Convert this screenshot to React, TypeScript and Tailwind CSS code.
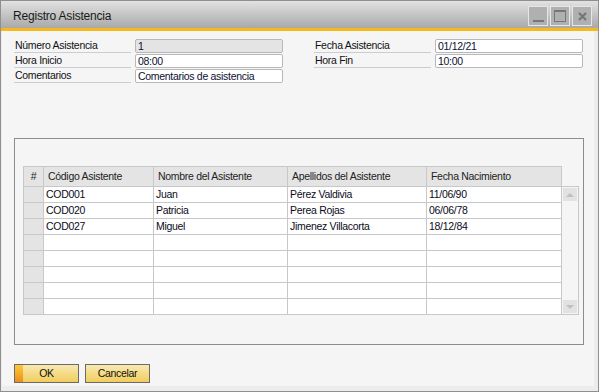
import React from "react";

const font = { fontFamily: '"Liberation Sans", Arial, sans-serif' };

const rows = [
  ["COD001", "Juan", "Pérez Valdivia", "11/06/90"],
  ["COD020", "Patricia", "Perea Rojas", "06/06/78"],
  ["COD027", "Miguel", "Jimenez Villacorta", "18/12/84"],
  ["", "", "", ""],
  ["", "", "", ""],
  ["", "", "", ""],
  ["", "", "", ""],
  ["", "", "", ""],
];

const cols = ["w-[110px]", "w-[134px]", "w-[139px]", "w-[135px]"];
const heads = ["Código Asistente", "Nombre del Asistente", "Apellidos del Asistente", "Fecha Nacimiento"];

const txt = "text-[10.5px] tracking-[-0.3px]";

function Field({ label, value, disabled }: { label: string; value: string; disabled?: boolean }) {
  return (
    <div className="flex items-end h-[15px]">
      <div className={"w-[117px] h-[15px] border-b border-[#c9ced6] leading-[14px] text-[#111] pl-[1px] " + txt}>
        {label}
      </div>
      <div
        className={
          "ml-[4px] w-[148px] h-[14px] border border-[#b8b8b8] rounded-[2px] leading-[12px] pl-[2px] text-[#0b1030] " +
          txt +
          (disabled ? " bg-[#e4e4e4]" : " bg-white")
        }
      >
        {value}
      </div>
    </div>
  );
}

function TitleBtn({ children }: { children: React.ReactNode }) {
  return (
    <div className="w-[20px] h-[20px] border border-[#e6e6e6] bg-[#b0b0b0] flex items-center justify-center">
      {children}
    </div>
  );
}

export default function App() {
  return (
    <div className="w-[599px] h-[392px] bg-white" style={font}>
      <div className="w-[599px] h-[392px] border border-[#8f8f8f] bg-[#ececec] flex flex-col">
        <div className="h-[27px] bg-gradient-to-b from-[#e2e2e2] to-[#a9a9a9] flex items-center pl-[12px] pr-[6px]">
          <span className="text-[12px] tracking-[-0.2px] text-[#1a1a1a] mt-[3px]">Registro Asistencia</span>
          <div className="ml-auto flex gap-[2px] mt-[3px]">
            <TitleBtn>
              <div className="w-[11px] h-[2px] bg-[#777] mt-[10px]" />
            </TitleBtn>
            <TitleBtn>
              <div className="w-[12px] h-[12px] border-[1.5px] border-[#777] border-t-[2px]" />
            </TitleBtn>
            <TitleBtn>
              <svg width="11" height="11" viewBox="0 0 11 11">
                <path d="M2 2 L9 9 M9 2 L2 9" stroke="#777" strokeWidth="2.4" />
              </svg>
            </TitleBtn>
          </div>
        </div>
        <div className="h-[3px] bg-[#f7b81d]" />
        <div className="flex-1 mx-[1px] mb-[5px] mr-[4px] bg-[#f5f5f5] flex flex-col px-[12px]">
          <div className="flex gap-[31px] mt-[7px]">
            <div className="flex flex-col">
              <Field label="Número Asistencia" value="1" disabled />
              <Field label="Hora Inicio" value="08:00" />
              <Field label="Comentarios" value="Comentarios de asistencia" />
            </div>
            <div className="flex flex-col">
              <Field label="Fecha Asistencia" value="01/12/21" />
              <Field label="Hora Fin" value="10:00" />
            </div>
          </div>

          <div className="mt-[55px] w-[570px] h-[207px] border border-[#8c8c8c] pl-[8px] pt-[27px]">
            <div className="flex">
              <div className="border-l border-t border-[#c8c8c8]">
                <div className={"flex h-[20px] bg-[#e4e4e4] border-b border-[#c8c8c8] text-[#222] " + txt}>
                  <div className="w-[20px] border-r border-[#c8c8c8] flex items-center justify-center">#</div>
                  {heads.map((h, i) => (
                    <div key={h} className={cols[i] + " border-r border-[#c8c8c8] flex items-center pl-[4px]"}>
                      {h}
                    </div>
                  ))}
                </div>
                {rows.map((r, ri) => (
                  <div key={ri} className={"flex h-[16px] border-b border-[#c8c8c8] text-[#0b0b20] " + txt}>
                    <div className="w-[20px] border-r border-[#c8c8c8] bg-[#e4e4e4]" />
                    {r.map((c, i) => (
                      <div key={i} className={cols[i] + " border-r border-[#c8c8c8] bg-white flex items-center pl-[2px]"}>
                        {c}
                      </div>
                    ))}
                  </div>
                ))}
              </div>
              <div className="mt-[20px] w-[17px] h-[129px] border border-l-0 border-[#c8c8c8] bg-[#f5f5f5] flex flex-col justify-between items-center py-[1px]">
                <div className="w-[14px] h-[13px] bg-[#e2e2e2] flex items-center justify-center">
                  <div className="w-0 h-0 border-l-[4px] border-r-[4px] border-b-[4px] border-l-transparent border-r-transparent border-b-[#c0c0c0]" />
                </div>
                <div className="w-[14px] h-[13px] bg-[#e2e2e2] flex items-center justify-center">
                  <div className="w-0 h-0 border-l-[4px] border-r-[4px] border-t-[4px] border-l-transparent border-r-transparent border-t-[#c0c0c0]" />
                </div>
              </div>
            </div>
          </div>

          <div className="flex gap-[6px] mt-[19px]">
            <button className={"relative w-[65px] h-[19px] border border-[#6a6a6a] bg-gradient-to-b from-[#f8e9b0] to-[#f1cd58] text-[#111] overflow-hidden " + txt}>
              <span className="absolute left-0 top-0 bottom-0 w-[8px] bg-gradient-to-b from-[#fbc936] to-[#ee8e1c]" />
              OK
            </button>
            <button className={"w-[65px] h-[19px] border border-[#6a6a6a] bg-gradient-to-b from-[#f8e9b0] to-[#f1cd58] text-[#111] " + txt}>
              Cancelar
            </button>
          </div>
        </div>
      </div>
    </div>
  );
}
